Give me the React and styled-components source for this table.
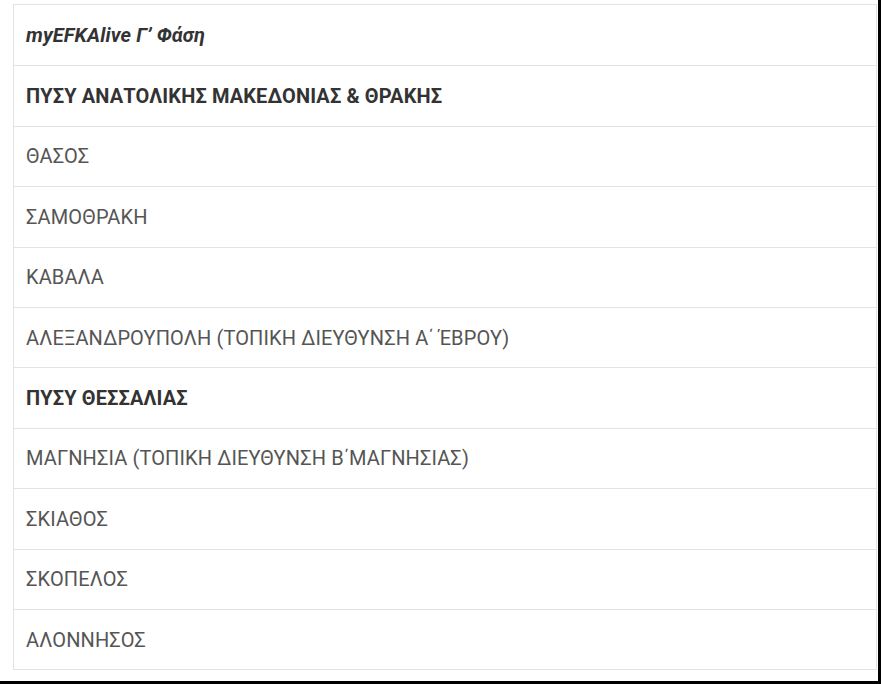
import React from "react";
import styled, { createGlobalStyle } from "styled-components";

const Global = createGlobalStyle`
  html, body { margin: 0; padding: 0; background: #000; }
  body { font-family: Roboto, "Noto Sans", sans-serif; }
`;

const Frame = styled.div`
  width: 878px;
  height: 681px;
  background: #fff;
  box-sizing: border-box;
  padding: 4px 1px 0 13px;
`;

const Table = styled.div`
  border: 1px solid #e3e3e3;
  display: flex;
  flex-direction: column;
`;

const Row = styled.div`
  height: 60.4px;
  box-sizing: border-box;
  display: flex;
  align-items: center;
  padding: 0 12px;
  font-size: 20px;
  letter-spacing: 0.12px;
  color: ${(p) => (p.$head ? "#333" : "#555")};
  font-weight: ${(p) => (p.$head ? 700 : 400)};
  font-style: ${(p) => (p.$italic ? "italic" : "normal")};
  & + & { border-top: 1px solid #e3e3e3; }
`;

const rows = [
  { t: "myEFKAlive Γ’ Φάση", head: true, italic: true },
  { t: "ΠΥΣΥ ΑΝΑΤΟΛΙΚΗΣ ΜΑΚΕΔΟΝΙΑΣ & ΘΡΑΚΗΣ", head: true },
  { t: "ΘΑΣΟΣ" },
  { t: "ΣΑΜΟΘΡΑΚΗ" },
  { t: "ΚΑΒΑΛΑ" },
  { t: "ΑΛΕΞΑΝΔΡΟΥΠΟΛΗ (ΤΟΠΙΚΗ ΔΙΕΥΘΥΝΣΗ Α΄ ΈΒΡΟΥ)" },
  { t: "ΠΥΣΥ ΘΕΣΣΑΛΙΑΣ", head: true },
  { t: "ΜΑΓΝΗΣΙΑ (ΤΟΠΙΚΗ ΔΙΕΥΘΥΝΣΗ Β΄ΜΑΓΝΗΣΙΑΣ)" },
  { t: "ΣΚΙΑΘΟΣ" },
  { t: "ΣΚΟΠΕΛΟΣ" },
  { t: "ΑΛΟΝΝΗΣΟΣ" },
];

export default function App() {
  return (
    <>
      <Global />
      <Frame>
        <Table>
          {rows.map((r, i) => (
            <Row key={i} $head={r.head} $italic={r.italic}>
              {r.t}
            </Row>
          ))}
        </Table>
      </Frame>
    </>
  );
}
